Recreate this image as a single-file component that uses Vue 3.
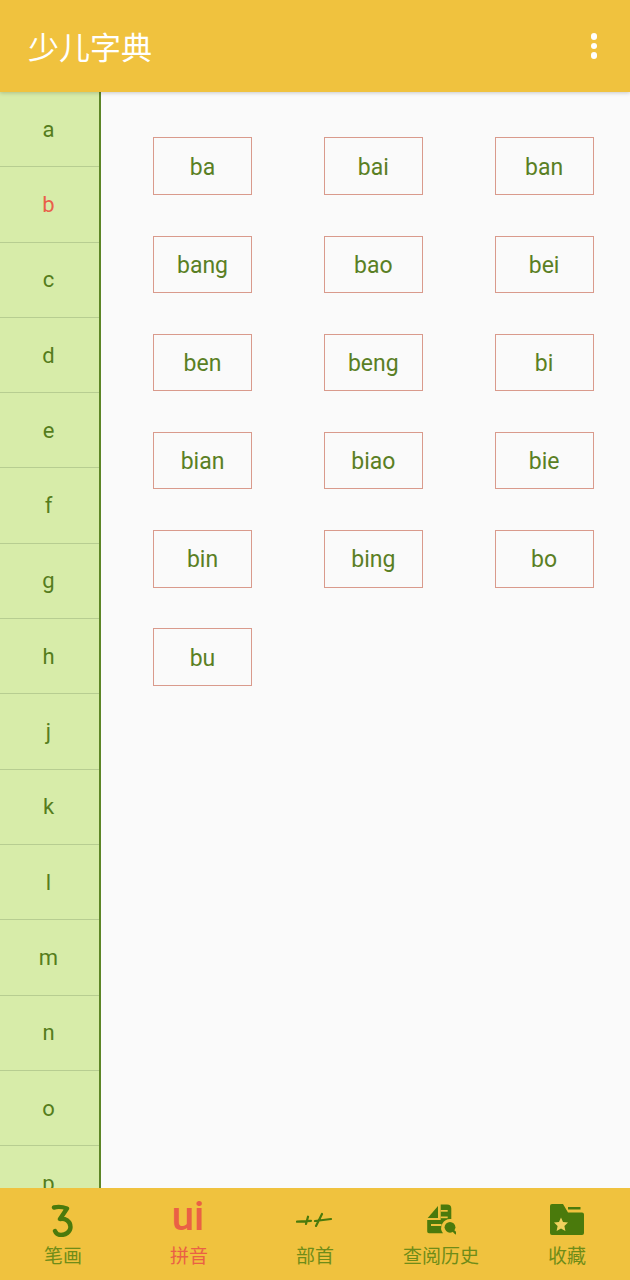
<script setup>
const letters = ['a','b','c','d','e','f','g','h','j','k','l','m','n','o','p']
const syllables = ['ba','bai','ban','bang','bao','bei','ben','beng','bi','bian','biao','bie','bin','bing','bo','bu']
const tabs = [
  { key: 'stroke', label: '笔画' },
  { key: 'pinyin', label: '拼音', active: true },
  { key: 'radical', label: '部首' },
  { key: 'history', label: '查阅历史' },
  { key: 'fav', label: '收藏' }
]
</script>

<template>
  <div class="app">
    <header class="bar">
      <h1 class="title">少儿字典</h1>
      <div class="more"><i></i><i></i><i></i></div>
    </header>
    <main class="body">
      <nav class="side">
        <div v-for="l in letters" :key="l" class="letter" :class="{ on: l === 'b' }">{{ l }}</div>
      </nav>
      <section class="grid">
        <div v-for="s in syllables" :key="s" class="cell">{{ s }}</div>
      </section>
    </main>
    <footer class="tabs">
      <div v-for="t in tabs" :key="t.key" class="tab" :class="{ on: t.active }">
        <div class="icon">
          <svg v-if="t.key === 'stroke'" width="30" height="35" viewBox="0 0 30 35">
            <path d="M6 5.5 C10 4.5 15 5 19 6.5 L12 17 C17 16 22.5 19 22.5 25 C22.5 30 17.5 33 13 33 C10.5 33 8 31.5 7 29" fill="none" stroke="#4a7a0c" stroke-width="4.4" stroke-linecap="round" stroke-linejoin="round"/>
          </svg>
          <span v-else-if="t.key === 'pinyin'" class="ui">ui</span>
          <svg v-else-if="t.key === 'radical'" width="38" height="15" viewBox="0 0 38 15">
            <path d="M1 9.7 L15 8.8 M19 9 L35 7 M12 4.7 L10 12 M26 2 L20 14" fill="none" stroke="#4a7a0c" stroke-width="2.2" stroke-linecap="round"/>
          </svg>
          <svg v-else-if="t.key === 'history'" width="30" height="31" viewBox="0 0 30 31">
            <path d="M1.7 14 L12 2 V14 Z" fill="#4a7a0c"/>
            <path d="M14.7 0.5 H21 Q25.3 0.5 25.3 4.5 V15 A9 9 0 0 0 17 29.3 H3 Q1.2 29.3 1.2 27.5 V16 H14.7 Z" fill="#4a7a0c"/>
            <rect x="14.7" y="6" width="7" height="1.7" fill="#f0c23e"/>
            <rect x="14.7" y="12.5" width="7" height="1.7" fill="#f0c23e"/>
            <rect x="5" y="20" width="10.5" height="2" fill="#f0c23e"/>
            <circle cx="24" cy="23.3" r="5.4" fill="#4a7a0c"/>
            <path d="M27.5 27 L29.7 29.2" stroke="#4a7a0c" stroke-width="2.4" stroke-linecap="round"/>
          </svg>
          <svg v-else width="34" height="31" viewBox="0 0 34 31">
            <path d="M0 2 Q0 0 2 0 H13 L18 8.5 H32 Q34 8.5 34 10.5 V29 Q34 31 32 31 H2 Q0 31 0 29 Z" fill="#4a7a0c"/>
            <rect x="18" y="3" width="12.5" height="2.5" fill="#4a7a0c"/>
            <path d="M11 13.5 L13 18 L18 18.6 L14.4 22 L15.4 27 L11 24.5 L6.6 27 L7.6 22 L4 18.6 L9 18 Z" fill="#f0d25e"/>
          </svg>
        </div>
        <span class="label">{{ t.label }}</span>
      </div>
    </footer>
  </div>
</template>

<style scoped>
.app {
  width: 630px;
  height: 1280px;
  display: flex;
  flex-direction: column;
  overflow: hidden;
  background: #fafafa;
  font-family: Roboto, "Noto Sans CJK SC", sans-serif;
}
.bar {
  height: 92px;
  flex: none;
  background: #f0c23e;
  display: flex;
  align-items: center;
  justify-content: space-between;
  padding: 0 33px 0 28px;
  box-shadow: 0 1px 4px rgba(0, 0, 0, .2);
  position: relative;
  z-index: 1;
}
.title {
  margin: 0 0 2px;
  font-size: 31px;
  font-weight: 400;
  color: #fff;
}
.more {
  display: flex;
  flex-direction: column;
  gap: 3px;
}
.more i {
  width: 6.5px;
  height: 6.5px;
  border-radius: 50%;
  background: #fff;
}
.body {
  flex: 1;
  min-height: 0;
  display: flex;
}
.side {
  width: 101px;
  flex: none;
  box-sizing: border-box;
  background: #d7eca9;
  border-right: 2px solid #5c8526;
  overflow: hidden;
}
.letter {
  height: 75.3px;
  box-sizing: border-box;
  display: flex;
  align-items: center;
  justify-content: center;
  padding-right: 2px;
  font-size: 22px;
  color: #557d1c;
  border-bottom: 1px solid #b7cd91;
}
.letter.on {
  color: #e9604a;
}
.grid {
  flex: 1;
  display: grid;
  grid-template-columns: repeat(3, 99px);
  grid-auto-rows: 57.5px;
  column-gap: 71.8px;
  row-gap: 40.7px;
  align-content: start;
  padding: 45.4px 0 0 52px;
}
.cell {
  box-sizing: border-box;
  border: 1px solid #d99a8c;
  display: flex;
  align-items: center;
  justify-content: center;
  padding-top: 2px;
  font-size: 23px;
  color: #5a7f24;
}
.tabs {
  height: 92px;
  flex: none;
  background: #f0c23e;
  display: grid;
  grid-template-columns: repeat(5, 1fr);
  position: relative;
  z-index: 1;
}
.tab {
  display: flex;
  flex-direction: column;
  align-items: center;
  color: #6f8c18;
}
.tab.on {
  color: #ea6045;
}
.icon {
  height: 57px;
  display: flex;
  align-items: center;
  justify-content: center;
  padding-top: 6px;
  box-sizing: border-box;
}
.ui {
  margin: 0 2px 5px 0;
  font-size: 40px;
  font-weight: 500;
  line-height: 1;
  color: #ea6045;
}
.label {
  font-size: 19px;
  line-height: 24px;
}
</style>
